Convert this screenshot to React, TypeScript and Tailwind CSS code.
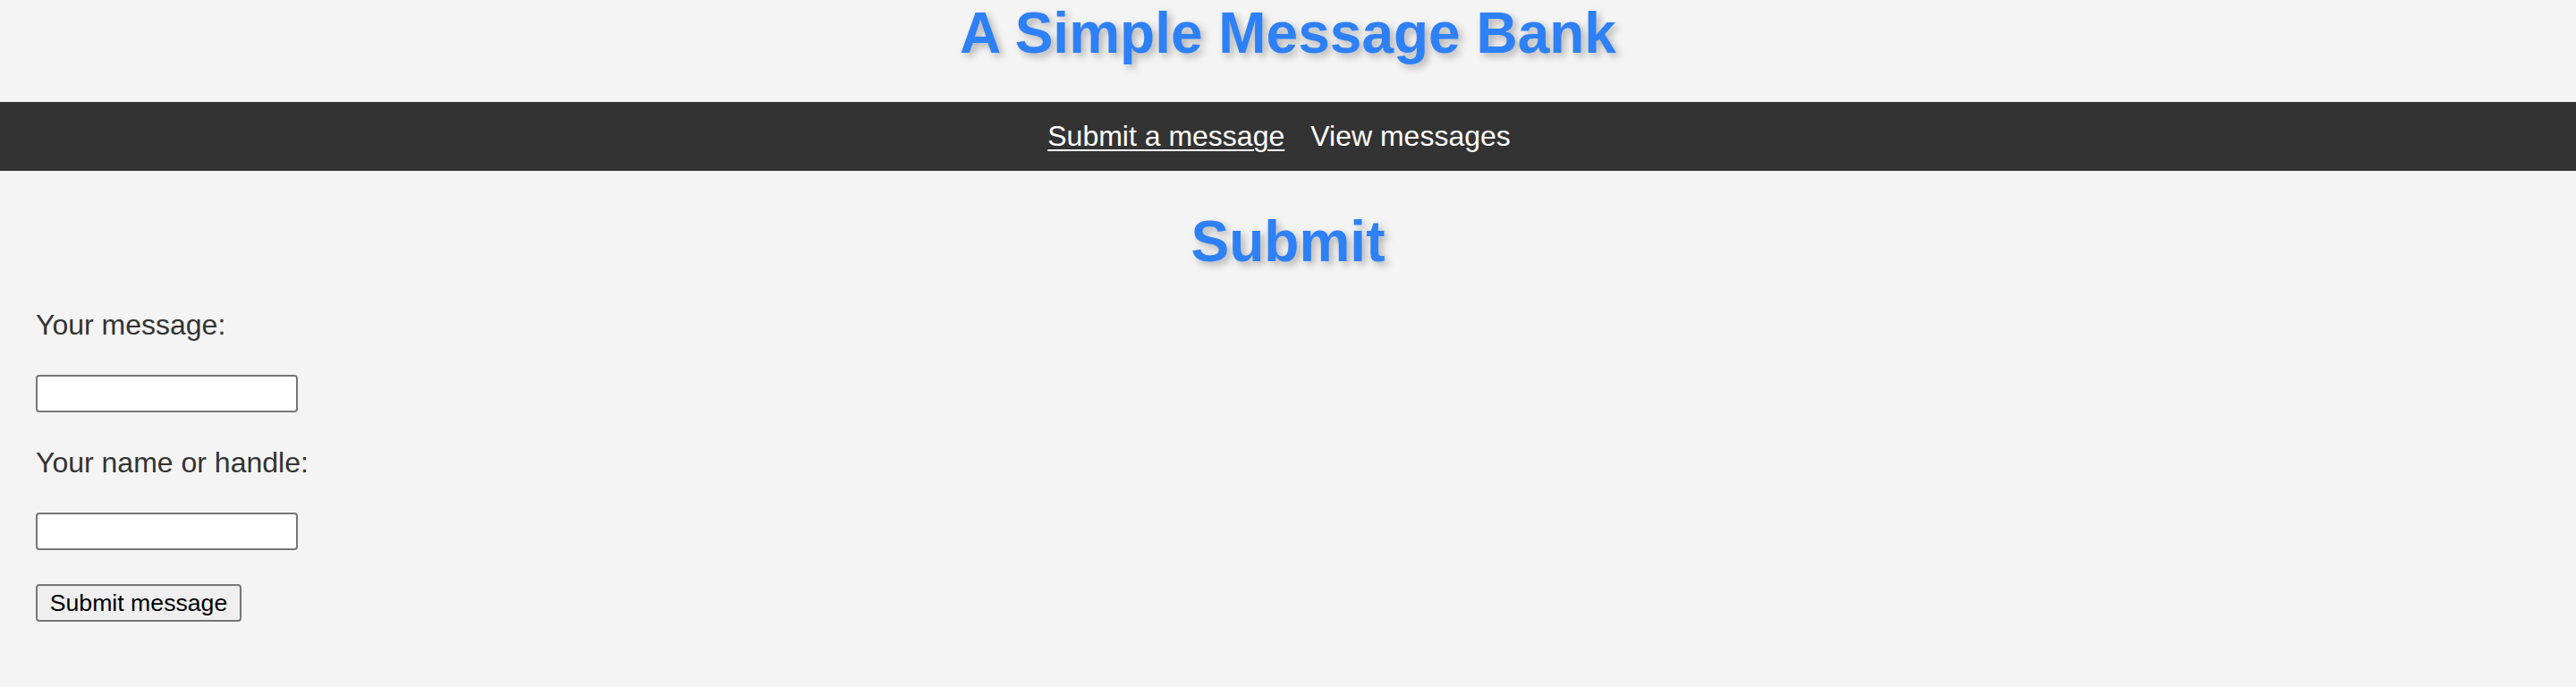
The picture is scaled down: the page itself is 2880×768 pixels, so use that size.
import React from 'react';

const font = "font-['Liberation_Sans',Arial,Helvetica,sans-serif]";

function NavBar() {
  return (
    <nav className="bg-[#333333] py-5 pr-[20px] flex justify-center gap-[29px] text-[32px] leading-[37px] text-white">
      <a href="#" className="underline decoration-2 underline-offset-[4px]">
        Submit a message
      </a>
      <a href="#">View messages</a>
    </nav>
  );
}

function SubmitForm() {
  return (
    <form className="px-[40px] flex flex-col items-start" onSubmit={(e) => e.preventDefault()}>
      <label htmlFor="message" className="mt-[38px] text-[32px] leading-[37px] text-[#333333]">
        Your message:
      </label>
      <input
        id="message"
        type="text"
        className="mt-[37px] w-[293px] h-[42px] bg-white border-2 border-[#767676] rounded-[4px]"
      />
      <label htmlFor="handle" className="mt-[38px] text-[32px] leading-[37px] text-[#333333]">
        Your name or handle:
      </label>
      <input
        id="handle"
        type="text"
        className="mt-[37px] w-[293px] h-[42px] bg-white border-2 border-[#767676] rounded-[4px]"
      />
      <button
        type="submit"
        className="mt-[38px] w-[230px] h-[42px] bg-[#efefef] border-2 border-[#767676] rounded-[4px] text-[26.67px] leading-none text-black"
      >
        Submit message
      </button>
    </form>
  );
}

export default function App() {
  return (
    <div className={`min-h-screen bg-[#f4f4f4] ${font}`}>
      <h1 className="text-center text-[64px] leading-[74px] font-bold text-[#2e80f6] mb-[40px] [text-shadow:4px_4px_8px_rgba(0,0,0,0.28)]">
        A Simple Message Bank
      </h1>
      <NavBar />
      <h2 className="mt-[42px] text-center text-[64px] leading-[74px] font-bold text-[#2e80f6] [text-shadow:4px_4px_8px_rgba(0,0,0,0.28)]">
        Submit
      </h2>
      <SubmitForm />
    </div>
  );
}
